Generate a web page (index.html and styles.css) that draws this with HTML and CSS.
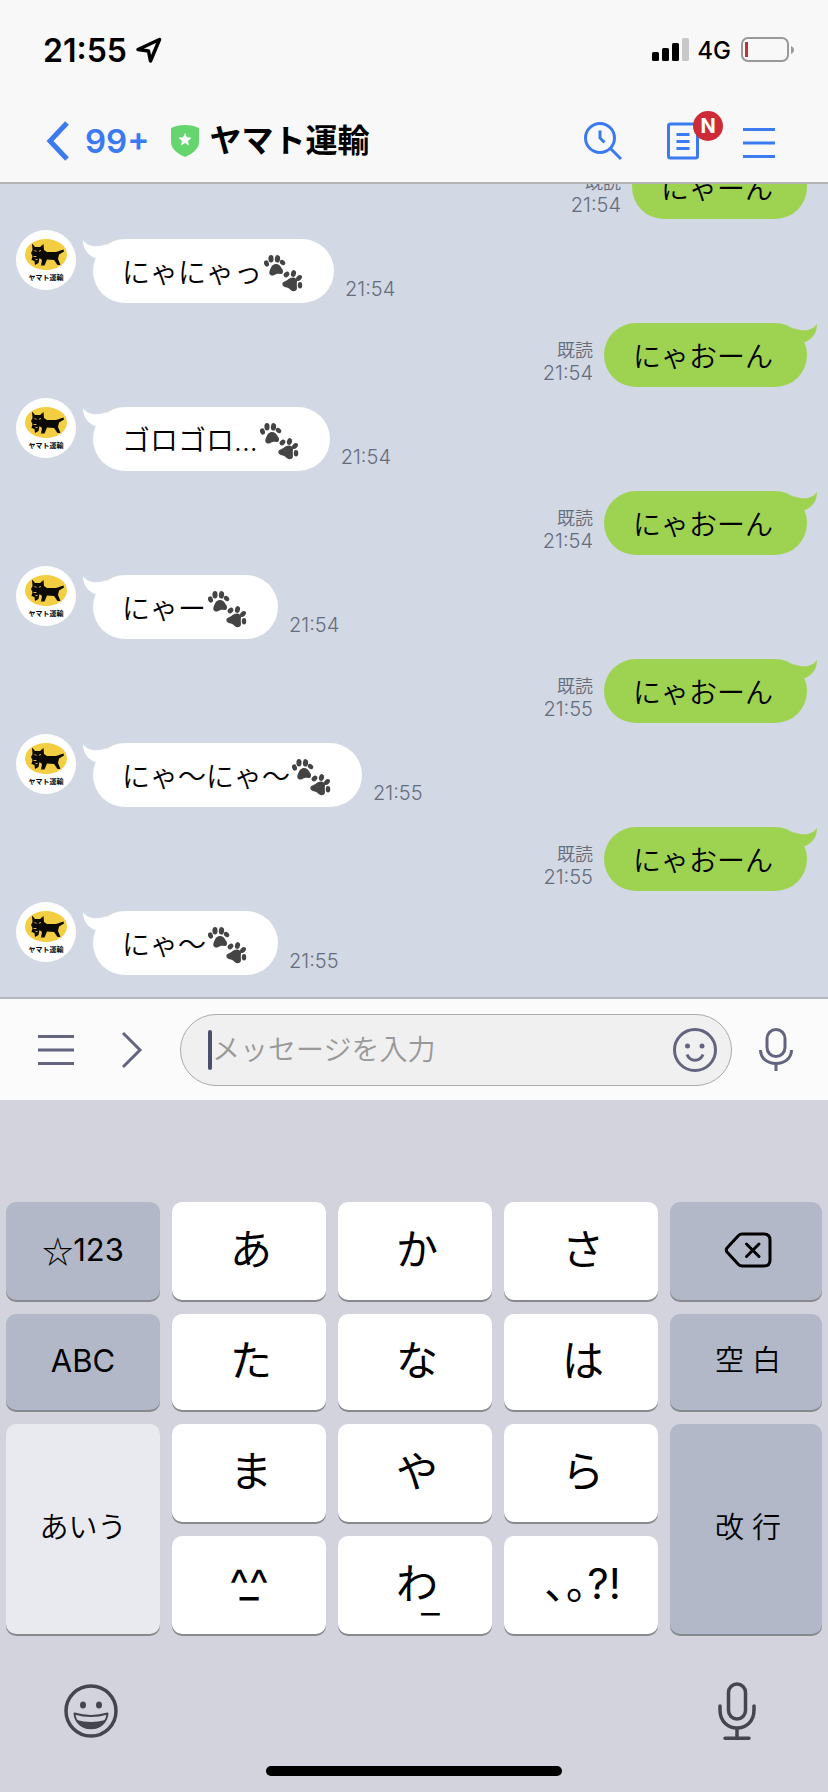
FILE: index.html
```html
<!DOCTYPE html>
<html lang="ja">
<head>
<meta charset="utf-8">
<meta name="viewport" content="width=device-width, initial-scale=1">
<title>ヤマト運輸</title>
<link rel="stylesheet" href="styles.css">
</head>
<body class="screen">
<svg class="sprite" aria-hidden="true">
  <symbol id="cat" viewBox="0 0 60 60">
    <ellipse cx="30" cy="24.500" rx="21" ry="15.500" fill="#f3cd42"/>
    <path d="M16 13.500L19 17H24L27.500 14L28 20L31 22H40L47.500 19.500L48 21.500L43 24.500L42 29L44.500 35H41.500L38 30L31 29.500L28.500 35.500H25L26 30L23.500 28L22.500 33L19 35L18.500 31L15.500 30L16.500 26L15 23L16.500 20Z" fill="#0c0a05"/>
    <path d="M18.500 20.500l2 .8M25 20.500l-2 .8M17.500 26.500h3M19.500 29.500h2" stroke="#f3cd42" stroke-width=".9" fill="none"/>
  </symbol>
  <symbol id="paws" viewBox="0 0 41 38">
    <g id="paw">
      <ellipse cx="4.500" cy="9.500" rx="2.400" ry="3.200" transform="rotate(-18 4.500 9.500)"/>
      <ellipse cx="9" cy="4.800" rx="2.600" ry="3.700"/>
      <ellipse cx="15.500" cy="4.800" rx="2.600" ry="3.700" transform="rotate(8 15.500 4.800)"/>
      <ellipse cx="20.500" cy="8.500" rx="2.300" ry="3" transform="rotate(-50 20.500 8.500)"/>
      <path d="M12.500 10.200c3.800-.8 5.500 1.300 7.500 4.500c2.300 3 .5 5.800-2 5.300c-3-.5-4 .3-6 1.200c-3 1.200-5.500-1-4.500-4c1.200-3 2-6.300 5-7z"/>
    </g>
    <ellipse cx="24.500" cy="20.500" rx="2.400" ry="3.200" transform="rotate(45 24.500 20.500)"/>
    <ellipse cx="31.500" cy="19.500" rx="2.500" ry="3.400" transform="rotate(12 31.500 19.500)"/>
    <ellipse cx="37" cy="24" rx="2.300" ry="3.400" transform="rotate(45 37 24)"/>
    <ellipse cx="38" cy="31.200" rx="2.200" ry="3.200"/>
    <path d="M28 24.200c3.200-1.700 7.500-.5 7 3.300c-.3 3-.2 4 0 6.500c0 3.200-3.800 4.400-5.900 2.300c-2-2-3.500-2.500-6.200-3.200c-3.200-1-3.400-4.600-.5-5.600c2.500-1 3.600-2.300 5.600-3.300z"/>
  </symbol>
  <symbol id="tail" viewBox="0 0 24 22">
    <path d="M0 1C4 7 12 9.500 24 5V19H12C4 16 0 9 0 1Z"/>
  </symbol>
</svg>

<header class="top">
  <div class="status">
    <span class="clock">21:55</span>
    <svg class="location" viewBox="0 0 28 28"><path d="M3 13.500L24.500 3.500L15.500 25L13.500 15Z" fill="none" stroke="#000" stroke-width="3.500" stroke-linejoin="round"/></svg>
    <svg class="signal" viewBox="0 0 38 24"><rect y="14" width="7" height="9" rx="1.500"/><rect x="10" y="10" width="7" height="13" rx="1.500"/><rect x="20" y="5" width="7" height="18" rx="1.500"/><rect x="30" width="7" height="23" rx="1.500" fill="#c8c8c8"/></svg>
    <span class="network">4G</span>
    <svg class="battery" viewBox="0 0 54 26"><rect x="1" y="1" width="46" height="23" rx="6" fill="none" stroke="#999" stroke-width="2"/><rect x="4" y="5" width="3" height="15" fill="#c4303a"/><path d="M50 9c4 1.500 4 6.500 0 8z" fill="#999"/></svg>
  </div>
  <nav class="titlebar">
    <button class="plain back" aria-label="戻る">
      <svg width="24" height="40" viewBox="0 0 24 40"><path d="M21 2L4 20L21 38" fill="none" stroke="currentColor" stroke-width="5"/></svg>
      <span>99+</span>
    </button>
    <svg class="shield" viewBox="0 0 28 32"><path d="M0 3C8-1 20-1 28 3V17C28 24 21 29 14 32C7 29 0 24 0 17Z" fill="#65d56e"/><path d="M14 8l1.900 4.300 4.600.5-3.500 3.100 1 4.600-4-2.400-4 2.400 1-4.600-3.500-3.100 4.600-.5z" fill="#fff"/></svg>
    <h1 class="title">ヤマト運輸</h1>
    <div class="actions">
      <button class="plain" aria-label="検索"><svg width="40" height="40" viewBox="0 0 40 40" fill="none" stroke="currentColor" stroke-width="3"><circle cx="17" cy="17" r="14.500"/><path d="M27.500 27.500L38 38M17 9.500V17L21.500 21.500"/></svg></button>
      <button class="plain note" aria-label="ノート"><svg width="32" height="38" viewBox="0 0 32 38" fill="none" stroke="currentColor" stroke-width="3"><rect x="1.500" y="2" width="29" height="34" rx="2"/><path d="M9.500 12.500h13M9.500 19.500h13M9.500 26.500h13"/></svg><span class="badge">N</span></button>
      <button class="plain" aria-label="メニュー"><svg width="32" height="36" viewBox="0 0 32 36" stroke="currentColor" stroke-width="3"><path d="M0 6.500h32M0 20h32M0 33.500h32"/></svg></button>
    </div>
  </nav>
</header>

<main class="chat">
  <ol class="messages">
    <li class="message sent"><div class="meta"><span>既読</span><time>21:54</time></div><p class="bubble">にゃーん<svg class="tail"><use href="#tail"/></svg></p></li>
    <li class="message received"><div class="avatar"><svg class="logo"><use href="#cat"/></svg><span class="brand">ヤマト運輸</span></div><p class="bubble">にゃにゃっ<svg class="paws" role="img" aria-label="足あと"><use href="#paws"/></svg><svg class="tail"><use href="#tail"/></svg></p><div class="meta"><time>21:54</time></div></li>
    <li class="message sent"><div class="meta"><span>既読</span><time>21:54</time></div><p class="bubble">にゃおーん<svg class="tail"><use href="#tail"/></svg></p></li>
    <li class="message received"><div class="avatar"><svg class="logo"><use href="#cat"/></svg><span class="brand">ヤマト運輸</span></div><p class="bubble">ゴロゴロ...<svg class="paws" role="img" aria-label="足あと"><use href="#paws"/></svg><svg class="tail"><use href="#tail"/></svg></p><div class="meta"><time>21:54</time></div></li>
    <li class="message sent"><div class="meta"><span>既読</span><time>21:54</time></div><p class="bubble">にゃおーん<svg class="tail"><use href="#tail"/></svg></p></li>
    <li class="message received"><div class="avatar"><svg class="logo"><use href="#cat"/></svg><span class="brand">ヤマト運輸</span></div><p class="bubble">にゃー<svg class="paws" role="img" aria-label="足あと"><use href="#paws"/></svg><svg class="tail"><use href="#tail"/></svg></p><div class="meta"><time>21:54</time></div></li>
    <li class="message sent"><div class="meta"><span>既読</span><time>21:55</time></div><p class="bubble">にゃおーん<svg class="tail"><use href="#tail"/></svg></p></li>
    <li class="message received"><div class="avatar"><svg class="logo"><use href="#cat"/></svg><span class="brand">ヤマト運輸</span></div><p class="bubble">にゃ〜にゃ〜<svg class="paws" role="img" aria-label="足あと"><use href="#paws"/></svg><svg class="tail"><use href="#tail"/></svg></p><div class="meta"><time>21:55</time></div></li>
    <li class="message sent"><div class="meta"><span>既読</span><time>21:55</time></div><p class="bubble">にゃおーん<svg class="tail"><use href="#tail"/></svg></p></li>
    <li class="message received"><div class="avatar"><svg class="logo"><use href="#cat"/></svg><span class="brand">ヤマト運輸</span></div><p class="bubble">にゃ〜<svg class="paws" role="img" aria-label="足あと"><use href="#paws"/></svg><svg class="tail"><use href="#tail"/></svg></p><div class="meta"><time>21:55</time></div></li>
  </ol>
</main>

<form class="composer">
  <button type="button" class="plain" aria-label="メニュー"><svg width="36" height="32" viewBox="0 0 36 32" stroke="currentColor" stroke-width="3"><path d="M0 2.500h36M0 16h36M0 29.500h36"/></svg></button>
  <button type="button" class="plain expand" aria-label="開く"><svg width="22" height="38" viewBox="0 0 22 38" fill="none" stroke="currentColor" stroke-width="3"><path d="M2 2L19 19L2 36"/></svg></button>
  <div class="field">
    <span class="caret"></span>
    <input class="input" type="text" placeholder="メッセージを入力" aria-label="メッセージを入力">
    <button type="button" class="plain" aria-label="スタンプ"><svg width="44" height="44" viewBox="0 0 44 44" fill="none" stroke="currentColor" stroke-width="3"><circle cx="22" cy="22" r="20.500"/><path d="M14 26.500C17 34 27 34 30 26.500"/><g fill="currentColor" stroke="none"><circle cx="14.500" cy="18" r="2.500"/><circle cx="29" cy="18" r="2.500"/></g></svg></button>
  </div>
  <button type="button" class="plain" aria-label="音声"><svg width="34" height="44" viewBox="0 0 34 44" fill="none" stroke="currentColor" stroke-width="3"><rect x="8" y="1.500" width="18" height="27" rx="9"/><path d="M1.500 22C1.500 40 32.500 40 32.500 22M17 35.500V43"/></svg></button>
</form>

<section class="keyboard" aria-label="キーボード">
  <div class="keys">
    <button class="key dark latin"><span class="star">☆</span>123</button>
    <button class="key">あ</button>
    <button class="key">か</button>
    <button class="key">さ</button>
    <button class="key dark" aria-label="削除"><svg width="48" height="36" viewBox="0 0 48 36" fill="none" stroke="#000" stroke-width="3" stroke-linejoin="round" stroke-linecap="round"><path d="M18 2H40Q46 2 46 8V28Q46 34 40 34H18Q16 34 14.500 32.500L3 20Q1.500 18 3 16L14.500 3.500Q16 2 18 2Z"/><path d="M22.500 12L35 24.500M35 12L22.500 24.500"/></svg></button>
    <button class="key dark latin">ABC</button>
    <button class="key">た</button>
    <button class="key">な</button>
    <button class="key">は</button>
    <button class="key dark word">空 白</button>
    <button class="key light tall kana">あいう</button>
    <button class="key">ま</button>
    <button class="key">や</button>
    <button class="key">ら</button>
    <button class="key dark tall word">改 行</button>
    <button class="key face"><span>^^</span><span class="mouth">_</span></button>
    <button class="key wa">わ<span class="under">_</span></button>
    <button class="key">､｡?!</button>
  </div>
  <div class="tools">
    <button class="plain" aria-label="絵文字"><svg width="54" height="54" viewBox="0 0 54 54" fill="none" stroke="currentColor" stroke-width="3.500"><circle cx="27" cy="27" r="25"/><g fill="currentColor" stroke="none"><ellipse cx="19" cy="21" rx="3" ry="3.500"/><ellipse cx="35" cy="21" rx="3" ry="3.500"/><path d="M12.500 36Q27 40 41.500 36C38 48 16 48 12.500 36Z"/></g><path d="M10.500 29.500Q27 34.500 43.500 29.500C42 49 12 49 10.500 29.500Z" stroke-width="2" stroke-linejoin="round"/></svg></button>
    <button class="plain" aria-label="音声入力"><svg width="38" height="58" viewBox="0 0 38 58" fill="none" stroke="currentColor" stroke-width="3.500" stroke-linecap="round"><rect x="10.500" y="2" width="17" height="35" rx="8.500"/><path d="M2 24V28C2 52 36 52 36 28V24M19 46V56M7 56.200H31"/></svg></button>
  </div>
  <div class="home"></div>
</section>
</body>
</html>
```
FILE: styles.css
```css
* {
  box-sizing: border-box;
}

.screen {
  display: flex;
  flex-direction: column;
  height: 100vh;
  margin: 0;
  overflow: hidden;
  background: #d3d3dd;
  color: #000;
  font-family: Inter, "Noto Sans CJK JP", sans-serif;
}

.sprite {
  display: none;
}

.plain {
  display: flex;
  align-items: center;
  padding: 0;
  border: 0;
  background: none;
  color: inherit;
  font: inherit;
}

/* Header */

.top {
  flex: none;
  border-bottom: 2px solid #b4b4b6;
  background: #f8f8f8;
}

.status {
  display: flex;
  align-items: center;
  height: 100px;
  padding: 0 33px 0 43px;
}

.clock {
  font-size: 32px;
  font-weight: 600;
}

.location {
  width: 28px;
  height: 28px;
  margin-left: 8px;
}

.signal {
  width: 38px;
  height: 24px;
  margin-left: auto;
}

.network {
  margin: 0 10px 0 7px;
  font-size: 24px;
  font-weight: 500;
}

.battery {
  width: 54px;
  height: 26px;
}

.titlebar {
  display: flex;
  align-items: center;
  height: 82px;
  padding: 0 53px 0 46px;
}

.back {
  gap: 15px;
  color: #3b7af0;
  font-size: 33px;
  font-weight: 600;
}

.shield {
  width: 28px;
  height: 32px;
  margin: 0 10px 0 22px;
}

.title {
  margin: 0;
  font-size: 32px;
  font-weight: 700;
  line-height: 40px;
}

.actions {
  display: flex;
  align-items: center;
  gap: 44px;
  margin-left: auto;
  color: #3b7af0;
}

.note {
  position: relative;
}

.badge {
  position: absolute;
  top: -11px;
  left: 26px;
  width: 30px;
  border-radius: 50%;
  background: #cc2b37;
  color: #fff;
  font-size: 20px;
  font-weight: 700;
  line-height: 30px;
  text-align: center;
}

/* Conversation */

.chat {
  display: flex;
  flex: 1;
  flex-direction: column;
  justify-content: flex-end;
  min-height: 0;
  padding: 0 21px 22px 16px;
  overflow: hidden;
  background: #d2d8e4;
}

.messages {
  flex: none;
  margin: 0;
  padding: 0;
  list-style: none;
}

.message {
  display: flex;
  align-items: flex-end;
}

.sent {
  justify-content: flex-end;
  gap: 11px;
  margin-top: 20px;
}

.received {
  min-height: 73px;
  margin-top: 11px;
}

.avatar {
  position: relative;
  align-self: flex-start;
  width: 60px;
  height: 60px;
  margin-right: 17px;
  border-radius: 50%;
  background: #fff;
}

.logo {
  display: block;
  width: 60px;
  height: 60px;
}

.brand {
  position: absolute;
  right: 0;
  bottom: 7px;
  left: 0;
  font-size: 7px;
  font-weight: 700;
  line-height: 10px;
  text-align: center;
  white-space: nowrap;
}

.bubble {
  position: relative;
  display: flex;
  align-items: center;
  height: 64px;
  margin: 0;
  border-radius: 32px;
  font-size: 28px;
  font-weight: 350;
  line-height: 40px;
}

.sent .bubble {
  padding: 4px 34px 0 29px;
  background: #9dd350;
}

.received .bubble {
  margin-right: 11px;
  padding: 4px 31px 0 29px;
  background: #fff;
}

.paws {
  width: 41px;
  height: 38px;
  fill: #444;
}

.tail {
  position: absolute;
  top: 0;
  width: 24px;
  height: 22px;
}

.received .tail {
  left: -10px;
  fill: #fff;
}

.sent .tail {
  right: -10px;
  fill: #9dd350;
  transform: scaleX(-1);
}

.meta {
  display: flex;
  flex-direction: column;
  align-items: flex-end;
  padding-bottom: 3px;
  color: #656d7c;
  font-size: 20px;
  font-weight: 350;
  line-height: 22px;
}

.meta span {
  font-size: 18px;
}

/* Message box */

.composer {
  display: flex;
  flex: none;
  align-items: center;
  height: 103px;
  padding: 0 35px 0 38px;
  border-top: 2px solid #b5b7bf;
  background: #fbfbfb;
  color: #63657f;
}

.expand {
  margin: 0 37px 0 47px;
}

.field {
  display: flex;
  flex: 1;
  align-items: center;
  height: 72px;
  margin-right: 27px;
  padding: 0 14px 0 27px;
  border: 1px solid #aaaaac;
  border-radius: 36px;
  background: #f0f0f0;
}

.caret {
  width: 4px;
  height: 40px;
  border-radius: 2px;
  background: #4a506c;
}

.input {
  flex: 1;
  min-width: 0;
  height: 44px;
  padding: 0;
  border: 0;
  outline: 0;
  background: none;
  color: #000;
  font: inherit;
  font-size: 28px;
  font-weight: 350;
}

.input::placeholder {
  color: #999;
  opacity: 1;
}

/* Keyboard */

.keyboard {
  flex: none;
  padding: 102px 6px 16px;
}

.keys {
  display: grid;
  grid-template-rows: 98px 96px 98px 98px;
  grid-template-columns: repeat(4, 154fr) 152fr;
  gap: 14px 12px;
}

.key {
  display: flex;
  align-items: center;
  justify-content: center;
  min-width: 0;
  padding: 0 0 2px 4px;
  border: 0;
  border-radius: 10px;
  background: #fff;
  box-shadow: 0 2px 0 #88898e;
  color: #000;
  font-family: inherit;
  font-size: 42px;
  line-height: 48px;
}

.dark {
  background: #b2b8c7;
}

.light {
  background: #e9eaf0;
}

.tall {
  grid-row: span 2;
}

.latin {
  padding-left: 0;
  font-size: 31px;
}

.star {
  font-family: "Noto Sans CJK JP", sans-serif;
  font-weight: 350;
}

.word {
  font-size: 29px;
  font-weight: 350;
}

.kana {
  padding-left: 0;
  font-size: 29px;
  font-weight: 350;
}

.face {
  display: grid;
  padding-left: 0;
  place-content: center;
  place-items: center;
}

.face span {
  grid-area: 1 / 1;
}

.face .mouth {
  padding-bottom: 4px;
}

.wa {
  position: relative;
}

.under {
  position: absolute;
  bottom: 12px;
  left: 83px;
  font-weight: 300;
}

.tools {
  display: flex;
  align-items: center;
  justify-content: space-between;
  height: 132px;
  padding: 22px 66px 0 58px;
  color: #44454f;
}

.home {
  width: 296px;
  height: 10px;
  margin: 0 auto;
  border-radius: 5px;
  background: #000;
}
```
